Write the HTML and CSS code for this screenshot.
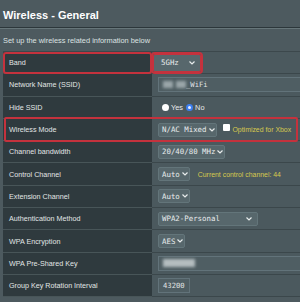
FILE: index.html
```html
<!DOCTYPE html>
<html lang="en">
<head>
  <meta charset="UTF-8" />
  <meta name="viewport" content="width=device-width, initial-scale=1.0"/>
  <title>Wireless - General</title>
  <link rel="stylesheet" href="styles.css">
</head>
<body>
  <h1 class="title">Wireless - General</h1>
  <div class="divider"></div>
  <p class="desc">Set up the wireless related information below</p>

  <div class="settings">
    <div class="row">
      <div class="label mark">Band</div>
      <div class="value"><span class="select band mark">5GHz<svg class="chev" viewBox="0 0 6 4"><polyline points="0.5,0.5 3,3 5.5,0.5"/></svg></span></div>
    </div>
    <div class="row">
      <div class="label">Network Name (SSID)</div>
      <div class="value"><span class="input wide"><span class="blur b1"></span><span class="blur b2"></span>_WiFi</span></div>
    </div>
    <div class="row">
      <div class="label">Hide SSID</div>
      <div class="value">
        <span class="radio"></span><span class="opt">Yes</span>
        <span class="radio on"></span><span class="opt">No</span>
      </div>
    </div>
    <div class="row mark">
      <div class="label">Wireless Mode</div>
      <div class="value">
        <span class="select">N/AC Mixed<svg class="chev" viewBox="0 0 6 4"><polyline points="0.5,0.5 3,3 5.5,0.5"/></svg></span>
        <span class="check"></span><span class="note">Optimized for Xbox</span>
      </div>
    </div>
    <div class="row">
      <div class="label">Channel bandwidth</div>
      <div class="value"><span class="select">20/40/80 MHz<svg class="chev" viewBox="0 0 6 4"><polyline points="0.5,0.5 3,3 5.5,0.5"/></svg></span></div>
    </div>
    <div class="row">
      <div class="label">Control Channel</div>
      <div class="value">
        <span class="select">Auto<svg class="chev" viewBox="0 0 6 4"><polyline points="0.5,0.5 3,3 5.5,0.5"/></svg></span>
        <span class="note spaced">Current control channel: 44</span>
      </div>
    </div>
    <div class="row">
      <div class="label">Extension Channel</div>
      <div class="value"><span class="select">Auto<svg class="chev" viewBox="0 0 6 4"><polyline points="0.5,0.5 3,3 5.5,0.5"/></svg></span></div>
    </div>
    <div class="row">
      <div class="label">Authentication Method</div>
      <div class="value"><span class="select auth">WPA2-Personal<svg class="chev" viewBox="0 0 6 4"><polyline points="0.5,0.5 3,3 5.5,0.5"/></svg></span></div>
    </div>
    <div class="row">
      <div class="label">WPA Encryption</div>
      <div class="value"><span class="select">AES<svg class="chev" viewBox="0 0 6 4"><polyline points="0.5,0.5 3,3 5.5,0.5"/></svg></span></div>
    </div>
    <div class="row">
      <div class="label">WPA Pre-Shared Key</div>
      <div class="value"><span class="input wide"><span class="blur b3"></span></span></div>
    </div>
    <div class="row">
      <div class="label">Group Key Rotation Interval</div>
      <div class="value"><span class="input">43200</span></div>
    </div>
  </div>
</body>
</html>
```

FILE: styles.css
```css
body {
  font-family: "Liberation Sans", Arial, sans-serif;
  background-color: #4d5a5f;
  color: #e2e6e6;
  margin: 0;
  height: 302px;
  overflow: hidden;
  white-space: nowrap;
}

.title {
  font-size: 11px;
  font-weight: bold;
  color: #ffffff;
  margin: 0;
  padding: 9px 3px 0;
  height: 18px;
}

.divider {
  height: 1px;
  background-color: #2c373b;
  border-bottom: 1px solid #67767a;
}

.desc {
  font-size: 7.4px;
  color: #dde2e2;
  margin: 0;
  padding: 7px 3px 0;
  height: 15px;
}

.settings {
  margin-left: 3px;
  border-top: 1px solid #3c484c;
  background-color: #3c484c;
}

.row {
  display: flex;
  height: 21.3px;
  border-bottom: 1px solid #3b474b;
}

.label {
  width: 143px;
  flex-shrink: 0;
  background-color: #2f3a3e;
  font-size: 7.2px;
  padding-left: 6px;
  display: flex;
  align-items: center;
  border-bottom: 1px solid #485558;
  margin-bottom: -1px;
}

.value {
  flex: 1;
  background-color: #4b595e;
  display: flex;
  align-items: center;
  padding-left: 6px;
}

.mark {
  outline: 2px solid #c4323d;
  outline-offset: -2px;
  border-radius: 3px;
  position: relative;
}

.row.mark {
  outline: none;
  z-index: 1;
}

/* red frame round the whole row, stops just short of the right edge */
.row.mark::after {
  content: "";
  position: absolute;
  left: 1px;
  right: 2px;
  top: -2px;
  bottom: -2px;
  border: 2px solid #c4323d;
  border-radius: 2px;
  pointer-events: none;
}

.select {
  font-family: "DejaVu Sans Mono", monospace;
  font-size: 7.4px;
  color: #e8ecec;
  background-color: #57676c;
  border: 1px solid #63757a;
  border-radius: 2px;
  height: 14px;
  padding: 0 1px 0 3px;
  display: inline-flex;
  align-items: center;
  box-sizing: border-box;
}

.value > .select.band {
  height: 18px;
  width: 48px;
  justify-content: space-between;
  padding: 0 5px 0 7px;
  margin-left: -5px;
  border: 1px solid #c4323d;
  outline-offset: 0;
}

.select.auth {
  width: 100px;
  justify-content: space-between;
  padding-right: 5px;
}

.chev {
  width: 6px;
  height: 4px;
  margin-left: 2px;
  fill: none;
  stroke: #e8ecec;
  stroke-width: 1.2;
}

.input {
  font-family: "DejaVu Sans Mono", monospace;
  font-size: 7.2px;
  color: #e0e4e4;
  background-color: #4f5e63;
  border: 1px solid #62737a;
  height: 15px;
  padding: 0 4px;
  display: inline-flex;
  align-items: center;
  box-sizing: border-box;
}

.input.wide {
  flex: 1;
  border-right: none;
}

.blur {
  display: inline-block;
  height: 7px;
  background-color: #9aa6a9;
  filter: blur(1.5px);
}

.b1 { width: 10px; margin-right: 3px; }
.b2 { width: 10px; }
.b3 { width: 32px; height: 8px; background-color: #b4bdbf; }

.radio {
  width: 7px;
  height: 7px;
  border-radius: 50%;
  background-color: #ffffff;
  margin: 0 2px 0 4px;
  box-sizing: border-box;
}

.radio.on {
  background-color: #e9f0ff;
  border: 2px solid #3d7ff0;
  margin-left: 3px;
}

.opt {
  font-size: 7.4px;
  color: #e6eaea;
}

.check {
  width: 7px;
  height: 7px;
  background-color: #ffffff;
  border-radius: 1px;
  margin: 0 3px 0 6px;
  align-self: flex-start;
  margin-top: 5px;
}

.note {
  font-size: 6.9px;
  color: #d7c94e;
}

.note.spaced {
  margin-left: 8px;
}
```
